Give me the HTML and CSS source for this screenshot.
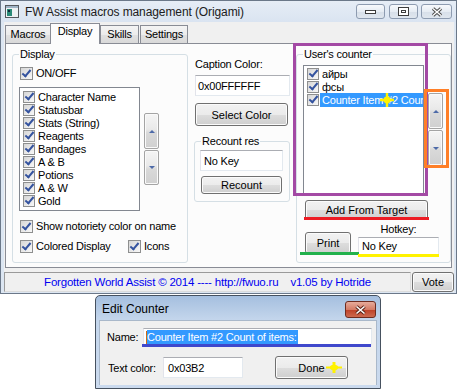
FILE: index.html
```html
<!DOCTYPE html>
<html lang="en">
<head>
    <meta charset="UTF-8">
    <title>FW Assist macros management</title>
    <link rel="stylesheet" href="styles.css">
</head>
<body>
<div class="desk">
    <div class="win main-win">
        <div class="titlebar">
            <svg class="app-icon" viewBox="0 0 14 13">
                <rect x="0.5" y="0.5" width="13" height="12" fill="#eef2f4" stroke="#55595e"/>
                <rect x="1" y="1" width="12" height="2" fill="#9fb3c6"/>
                <rect x="2" y="4" width="5" height="7" fill="#2b8a78"/>
                <rect x="3" y="5" width="2" height="2" fill="#0d2c3a"/>
            </svg>
            <span class="title">FW Assist macros management (Origami)</span>
            <div class="caption-btns">
                <span class="cap-btn cap-min">
                    <svg width="11" height="5"><rect x="0.5" y="0.5" width="10" height="3" fill="#fff" stroke="#3d3d3d"/></svg>
                </span>
                <span class="cap-btn cap-max">
                    <svg width="11" height="9"><rect x="0.5" y="0.5" width="10" height="8" fill="#fff" stroke="#3d3d3d"/><rect x="3.5" y="3.5" width="4" height="2" fill="none" stroke="#3d3d3d"/></svg>
                </span>
                <span class="cap-btn cap-close">
                    <svg width="12" height="10"><path d="M2 1.5l8 7M10 1.5l-8 7" stroke="#4a4a4a" stroke-width="3.4"/><path d="M2 1.5l8 7M10 1.5l-8 7" stroke="#fff" stroke-width="1.4"/></svg>
                </span>
            </div>
        </div>
        <div class="client">
            <div class="tabs">
                <div class="tab t-macros">Macros</div>
                <div class="tab active t-display">Display</div>
                <div class="tab t-skills">Skills</div>
                <div class="tab t-settings">Settings</div>
            </div>
            <div class="panel">
                <fieldset class="group display-group">
                    <legend>Display</legend>
                    <div class="check-row"><span class="cb"></span>ON/OFF</div>
                    <div class="list-row">
                        <ul class="listbox display-list">
                            <li><span class="cb sm"></span>Character Name</li>
                            <li><span class="cb sm"></span>Statusbar</li>
                            <li><span class="cb sm"></span>Stats (String)</li>
                            <li><span class="cb sm"></span>Reagents</li>
                            <li><span class="cb sm"></span>Bandages</li>
                            <li><span class="cb sm"></span>A &amp; B</li>
                            <li><span class="cb sm"></span>Potions</li>
                            <li><span class="cb sm"></span>A &amp; W</li>
                            <li><span class="cb sm"></span>Gold</li>
                        </ul>
                        <div class="spin">
                            <span class="spin-btn"><span class="arrow up"></span></span>
                            <span class="spin-btn short"><span class="arrow down"></span></span>
                        </div>
                    </div>
                    <div class="check-row notoriety"><span class="cb"></span>Show notoriety color on name</div>
                    <div class="check-row colored">
                        <span class="cb-item first"><span class="cb"></span>Colored Display</span>
                        <span class="cb-item"><span class="cb"></span>Icons</span>
                    </div>
                </fieldset>

                <div class="mid-col">
                    <div class="cap-label">Caption Color:</div>
                    <div class="field caption-field">0x00FFFFFF</div>
                    <button class="btn select-btn">Select Color</button>
                    <fieldset class="group recount-group">
                        <legend>Recount res</legend>
                        <div class="field recount-field">No Key</div>
                        <button class="btn recount-btn">Recount</button>
                    </fieldset>
                </div>

                <fieldset class="group counter-group">
                    <legend>User's counter</legend>
                    <div class="list-row">
                        <ul class="listbox counter-list">
                            <li><span class="cb sm"></span>айры</li>
                            <li><span class="cb sm"></span>фсы</li>
                            <li><span class="cb sm"></span><span class="sel">Counter Item #2 Count of items:</span></li>
                        </ul>
                        <div class="spin">
                            <span class="spin-btn"><span class="arrow up"></span></span>
                            <span class="spin-btn"><span class="arrow down"></span></span>
                        </div>
                    </div>
                    <button class="btn add-btn">Add From Target</button>
                    <div class="hotkey-row">
                        <button class="btn print-btn">Print</button>
                        <div class="hotkey-col">
                            <div class="hotkey-label">Hotkey:</div>
                            <div class="field hotkey-field">No Key</div>
                        </div>
                    </div>
                </fieldset>
            </div>
            <div class="status-row">
                <div class="status">Forgotten World Assist © 2014 ---- http://fwuo.ru<span class="gap"></span>v1.05 by Hotride</div>
                <button class="btn vote-btn">Vote</button>
            </div>
        </div>
    </div>

    <div class="win dialog">
        <div class="dlg-title">
            <span>Edit Counter</span>
            <span class="dlg-close">
                <svg width="13" height="10"><path d="M2.5 1.5l8 7M10.5 1.5l-8 7" stroke="#5b2318" stroke-width="3.6"/><path d="M2.5 1.5l8 7M10.5 1.5l-8 7" stroke="#fff" stroke-width="1.6"/></svg>
            </span>
        </div>
        <div class="dlg-body">
            <div class="dlg-row name-row">
                <span class="dlg-label name-label">Name:</span>
                <div class="field name-field"><span class="caret"></span><span class="sel-text">Counter Item #2 Count of items:</span></div>
            </div>
            <div class="dlg-row color-row">
                <span class="dlg-label color-label">Text color:</span>
                <div class="field color-field">0x03B2</div>
                <button class="btn done-btn">Done</button>
            </div>
        </div>
    </div>

    <!-- paint marks drawn over the screenshot -->
    <div class="mark mark-purple"></div>
    <div class="mark mark-orange"></div>
    <div class="mark line-red"></div>
    <div class="mark line-green"></div>
    <div class="mark line-yellow"></div>
    <div class="mark line-blue"></div>
    <svg class="mark cross cross-list" viewBox="0 0 14 14" preserveAspectRatio="none">
        <path d="M7 0v14M0 7h14" stroke="#fff200" stroke-width="2.4"/>
        <circle cx="7" cy="7" r="3.4" fill="#fff200"/>
    </svg>
    <svg class="mark cross cross-done" viewBox="0 0 14 14" preserveAspectRatio="none">
        <path d="M7 0v14M0 7h14" stroke="#fff200" stroke-width="2.6"/>
        <circle cx="7" cy="7" r="3.6" fill="#fff200"/>
    </svg>
</div>
</body>
</html>
```

FILE: styles.css
```css
body {
    margin: 0;
    background: #fff;
    font-family: "Liberation Sans", Arial, sans-serif;
    font-size: 11px;
    letter-spacing: -0.2px;
    color: #000;
}

.desk {
    position: relative;
    width: 458px;
    height: 390px;
    overflow: hidden;
}

/* windows */
.win {
    position: absolute;
    box-sizing: border-box;
    border: 1px solid #6b7889;
}

.main-win {
    left: 0;
    top: 0;
    width: 457px;
    height: 294px;
    display: flex;
    flex-direction: column;
    background: #dce6f2;
}

.titlebar {
    height: 21px;
    flex: none;
    display: flex;
    align-items: flex-start;
    background: linear-gradient(#e6edf6, #dae4f1);
}

.app-icon {
    width: 14px;
    height: 13px;
    margin: 4px 0 0 4px;
}

.title {
    font-size: 12px;
    line-height: 14px;
    margin: 4px 0 0 6px;
    color: #202020;
    letter-spacing: -0.1px;
}

.caption-btns {
    margin: 3px 4px 0 auto;
    display: flex;
}

.cap-btn {
    height: 15px;
    box-sizing: border-box;
    border: 1px solid #8d9bb0;
    border-radius: 3px;
    background: linear-gradient(#f7f9fc, #e6ecf3 50%, #d7dfe9 51%, #dfe6ee);
    display: flex;
    align-items: center;
    justify-content: center;
}

.cap-min {
    width: 29px;
    margin-right: 4px;
    align-items: flex-end;
    padding-bottom: 3px;
}

.cap-max {
    width: 29px;
    margin-right: 3px;
}

.cap-close {
    width: 31px;
}

.client {
    flex: 1;
    display: flex;
    flex-direction: column;
    margin: 0 2px 1px 3px;
    padding-top: 1px;
    background: #f0f0f0;
}

/* tabs */
.tabs {
    display: flex;
    align-items: flex-end;
    height: 20px;
    padding-left: 1px;
}

.tab {
    height: 18px;
    box-sizing: border-box;
    border: 1px solid #898c95;
    border-bottom: none;
    background: linear-gradient(#f4f4f4, #ececec 50%, #e1e1e1 51%, #d9d9d9);
    line-height: 16px;
    text-align: center;
}

.tab.active {
    height: 21px;
    margin-bottom: -1px;
    position: relative;
    z-index: 1;
    background: #fcfcfc;
    line-height: 15px;
}

.t-macros { width: 46px; }
.t-display { width: 50px; margin-left: -1px; }
.t-skills { width: 39px; }
.t-settings { width: 48px; margin-left: 1px; }

.panel {
    height: 225px;
    width: 447px;
    margin-left: 1px;
    box-sizing: border-box;
    border: 1px solid #898c95;
    background: #fcfcfc;
    display: flex;
    align-items: flex-start;
    padding: 4px 0 0 6px;
}

/* group boxes */
.group {
    margin: 0;
    box-sizing: border-box;
    border: 1px solid #d5dfe5;
    border-radius: 3px;
    min-width: 0;
}

.group legend {
    padding: 0 1px;
    line-height: 13px;
}

.display-group {
    width: 176px;
    height: 215px;
    padding: 6px 0 0 7px;
}

.display-group legend {
    margin-left: -1px;
}

.check-row {
    display: flex;
    align-items: center;
    height: 13px;
    line-height: 13px;
    white-space: nowrap;
}

.cb-item {
    display: flex;
    align-items: center;
}

.cb-item.first {
    width: 108px;
}

.cb {
    width: 13px;
    height: 13px;
    box-sizing: border-box;
    border: 1px solid #8e8f8f;
    background: linear-gradient(135deg, #d6d6d6, #f8f8f8);
    position: relative;
    flex: none;
    margin-right: 3px;
}

.cb::after {
    content: "";
    position: absolute;
    left: 3px;
    top: 0;
    width: 3px;
    height: 7px;
    border: solid #34539f;
    border-width: 0 2px 2px 0;
    transform: rotate(40deg);
}

.cb.sm {
    width: 12px;
    height: 12px;
}

.cb.sm::after {
    left: 3px;
    top: -1px;
}

.list-row {
    display: flex;
    align-items: flex-start;
}

.display-group .list-row {
    margin: 7px 0 0 -1px;
}

.listbox {
    list-style: none;
    margin: 0;
    box-sizing: border-box;
    border: 1px solid #828790;
    background: #fff;
    overflow: hidden;
}

.listbox li {
    height: 13px;
    display: flex;
    align-items: center;
    white-space: nowrap;
}

.display-list {
    width: 121px;
    height: 124px;
    padding: 2px 0 0 3px;
}

.spin {
    display: flex;
    flex-direction: column;
    gap: 1px;
    margin-left: 4px;
}

.display-group .spin {
    margin-top: 26px;
}

.spin-btn {
    width: 15px;
    height: 36px;
    box-sizing: border-box;
    border: 1px solid #a4a4a4;
    border-radius: 2px;
    background: linear-gradient(#f5f5f5, #e9e9e9 45%, #d9d9d9 55%, #d0d0d0);
    box-shadow: inset 0 0 0 1px #fafafa;
    display: flex;
    align-items: center;
    justify-content: center;
}

.spin-btn.short {
    height: 35px;
}

.arrow {
    width: 0;
    height: 0;
    border-left: 3px solid transparent;
    border-right: 3px solid transparent;
}

.arrow.up {
    border-bottom: 3px solid #4d6aa8;
}

.arrow.down {
    border-top: 3px solid #4d6aa8;
}

.notoriety {
    margin-top: 9px;
}

.colored {
    margin-top: 7px;
}

/* middle column */
.mid-col {
    width: 96px;
    margin-left: 6px;
    display: flex;
    flex-direction: column;
    align-items: flex-start;
}

.cap-label {
    margin-top: 10px;
    padding-left: 1px;
    line-height: 13px;
}

.field {
    box-sizing: border-box;
    border: 1px solid;
    border-color: #abadb3 #e3e9ef #e3e9ef #e2e3ea;
    background: #fff;
    padding-left: 2px;
    display: flex;
    align-items: center;
    white-space: nowrap;
    overflow: hidden;
}

.btn {
    box-sizing: border-box;
    border: 1px solid #707070;
    border-radius: 3px;
    background: linear-gradient(#f2f2f2, #ebebeb 50%, #dddddd 51%, #cfcfcf);
    box-shadow: inset 0 0 0 1px #fbfbfb;
    font: inherit;
    color: #000;
    padding: 0;
    text-align: center;
}

.caption-field {
    margin: 4px 0 0 1px;
    width: 95px;
    height: 21px;
}

.select-btn {
    margin: 7px 0 0 1px;
    width: 93px;
    height: 23px;
}

.recount-group {
    margin-top: 9px;
    width: 96px;
    height: 67px;
    padding: 2px 0 0 5px;
}

.recount-group legend {
    margin-left: 1px;
}

.recount-field {
    width: 83px;
    height: 21px;
    padding-left: 3px;
}

.recount-btn {
    display: block;
    margin: 5px 0 0 1px;
    width: 81px;
    height: 18px;
}

/* user's counter */
.counter-group {
    margin-left: 6px;
    width: 155px;
    height: 215px;
    padding: 4px 0 0 6px;
}

.counter-list {
    width: 121px;
    height: 129px;
    padding: 1px 0 0 3px;
}

.counter-group .spin {
    margin-top: 28px;
}

.sel {
    background: #3399ff;
    color: #fff;
    margin-left: -2px;
    padding: 0 2px;
    height: 14px;
    line-height: 14px;
}

.add-btn {
    display: block;
    margin: 6px 0 0 2px;
    width: 123px;
    height: 20px;
}

.hotkey-row {
    display: flex;
    align-items: flex-end;
    margin: 3px 0 0 2px;
}

.print-btn {
    width: 46px;
    height: 22px;
    margin-bottom: 1px;
}

.hotkey-col {
    width: 81px;
    margin-left: 7px;
    display: flex;
    flex-direction: column;
    align-items: center;
}

.hotkey-label {
    line-height: 13px;
}

.hotkey-field {
    align-self: stretch;
    margin-top: 1px;
    height: 18px;
    padding-left: 3px;
}

/* status bar */
.status-row {
    display: flex;
    margin-top: 4px;
    height: 20px;
}

.status {
    width: 407px;
    box-sizing: border-box;
    border: 1px solid;
    border-color: #9a9a9a #dcdcdc #dcdcdc #9a9a9a;
    color: #0000f0;
    font-size: 11.5px;
    line-height: 18px;
    text-align: center;
}

.status .gap {
    display: inline-block;
    width: 12px;
}

.vote-btn {
    margin-left: 1px;
    width: 42px;
    height: 20px;
}

/* edit counter dialog */
.dialog {
    left: 95px;
    top: 295px;
    width: 286px;
    height: 94px;
    border-color: #46515f;
    border-radius: 5px 5px 0 0;
    background: linear-gradient(#a5bfdf, #c4d6ec 24px, #cbdaee);
    display: flex;
    flex-direction: column;
}

.dlg-title {
    height: 24px;
    flex: none;
    display: flex;
    align-items: flex-start;
    padding-left: 6px;
    font-size: 12px;
    line-height: 14px;
    letter-spacing: 0;
}

.dlg-title > span:first-child {
    margin-top: 6px;
}

.dlg-close {
    margin: 5px 4px 0 auto;
    width: 31px;
    height: 17px;
    box-sizing: border-box;
    border: 1px solid #6e2b1f;
    border-radius: 3px;
    background: linear-gradient(#e6ab9b, #d47c66 50%, #be3f27 51%, #cc6a50);
    display: flex;
    align-items: center;
    justify-content: center;
}

.dlg-body {
    flex: 1;
    margin: 0 3px 3px;
    background: #f0f0f0;
    border: 1px solid #a9b8ca;
    border-bottom: none;
}

.dlg-row {
    display: flex;
    align-items: center;
}

.name-row {
    margin-top: 7px;
    padding-left: 7px;
    height: 18px;
}

.name-label {
    width: 36px;
}

.name-field {
    width: 229px;
    height: 18px;
    padding-left: 2px;
}

.caret {
    width: 1px;
    height: 13px;
    background: #d06a10;
    flex: none;
}

.sel-text {
    background: #3399ff;
    color: #fff;
    line-height: 14px;
    padding-right: 1px;
}

.color-row {
    margin-top: 10px;
    padding-left: 8px;
    height: 23px;
}

.color-label {
    width: 55px;
}

.color-field {
    width: 80px;
    height: 21px;
    padding-left: 4px;
}

.done-btn {
    margin-left: 32px;
    width: 73px;
    height: 23px;
}

/* paint marks */
.mark {
    position: absolute;
    box-sizing: border-box;
}

.mark-purple {
    left: 293px;
    top: 43px;
    width: 135px;
    height: 153px;
    border: 3px solid #a349a4;
}

.mark-orange {
    left: 424px;
    top: 89px;
    width: 25px;
    height: 79px;
    border: 3px solid #ff7f27;
}

.line-red {
    left: 304px;
    top: 217px;
    width: 125px;
    height: 3px;
    background: #ed1c24;
}

.line-green {
    left: 300px;
    top: 252px;
    width: 59px;
    height: 3px;
    background: #22b14c;
}

.line-yellow {
    left: 358px;
    top: 254px;
    width: 81px;
    height: 3px;
    background: #fff200;
}

.line-blue {
    left: 142px;
    top: 344px;
    width: 229px;
    height: 3px;
    background: #3f48cc;
}

.cross-list {
    left: 380px;
    top: 93px;
    width: 14px;
    height: 14px;
}

.cross-done {
    left: 326px;
    top: 362px;
    width: 16px;
    height: 11px;
}
```
